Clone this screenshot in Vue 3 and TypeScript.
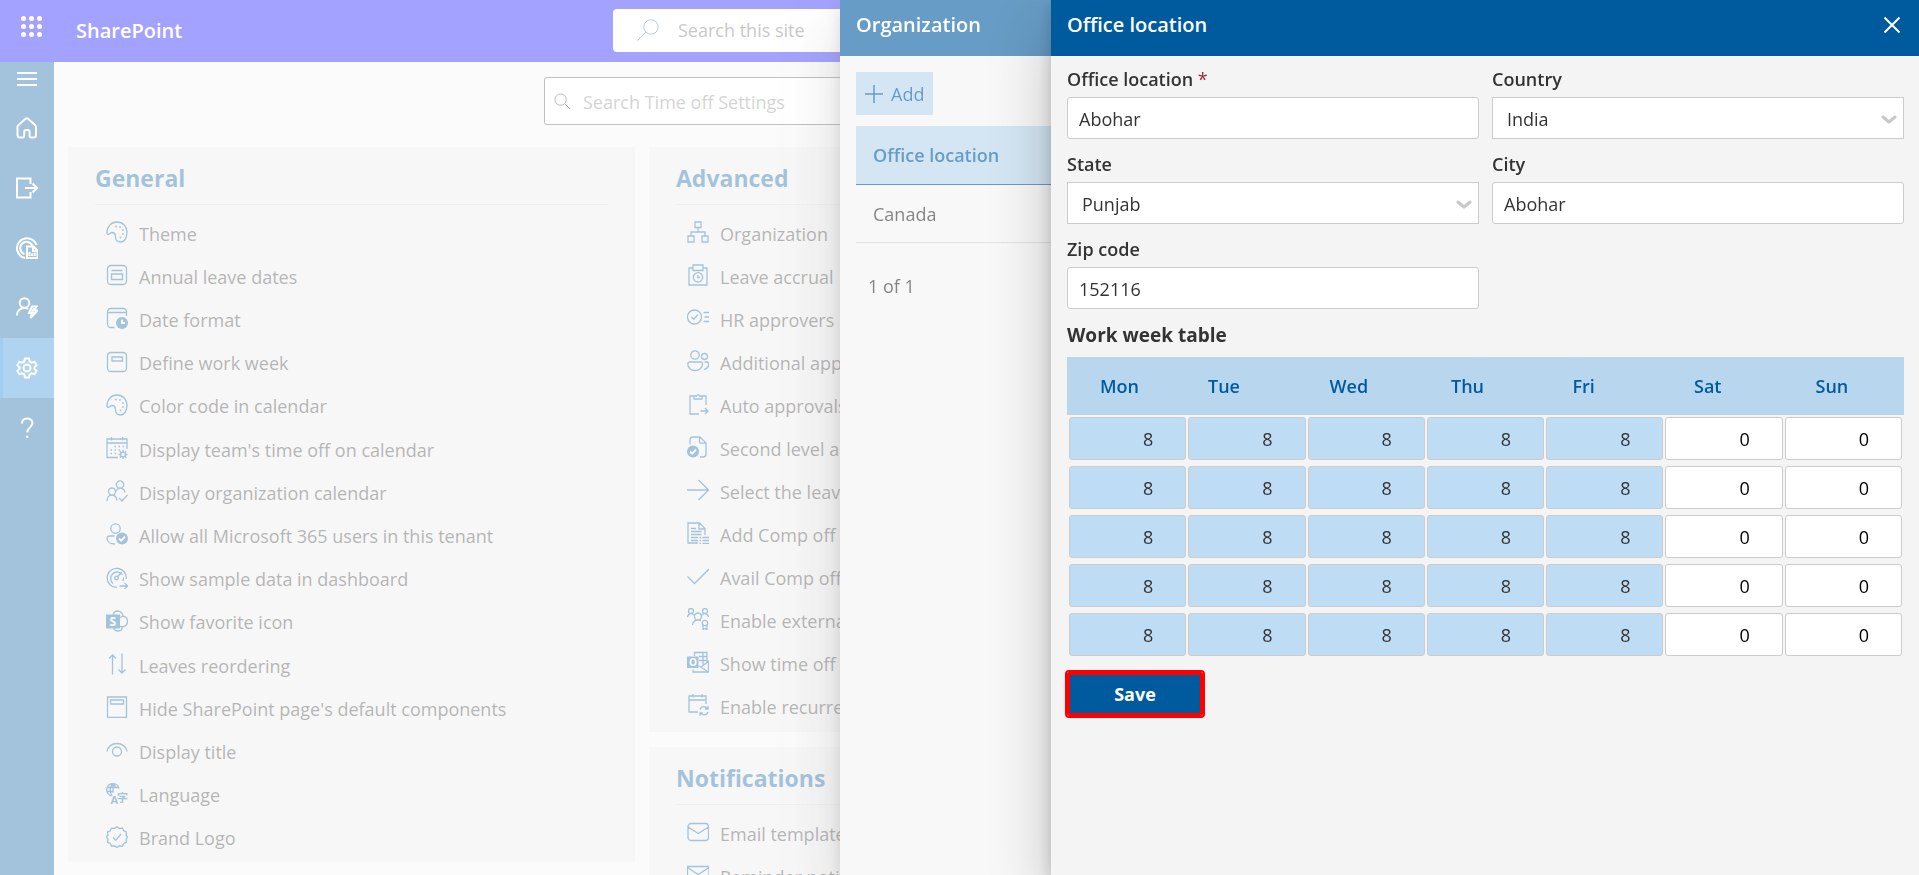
<script setup lang="ts">
import { ref } from 'vue'

interface Glyph { x: number; y: number; size: number; text: string; light?: boolean }
interface Icon { line?: string; fill?: string; cut?: string; glyphs?: Glyph[] }
interface Item { icon: string; label: string }
interface Card { title: string; items: Item[] }

const circle = (cx: number, cy: number, r: number): string =>
  `M${cx - r} ${cy}a${r} ${r} 0 1 0 ${2 * r} 0a${r} ${r} 0 1 0 ${-2 * r} 0z`

const roundBox = 'M5 1.5h12a3.5 3.5 0 0 1 3.5 3.5v12a3.5 3.5 0 0 1-3.5 3.5H5A3.5 3.5 0 0 1 1.5 17V5A3.5 3.5 0 0 1 5 1.5z'

const icons: Record<string, Icon> = {
  home: { line: 'M1.5 10.2c0-.8.3-1.5.9-2.1l6.8-6.2a2.2 2.2 0 0 1 3 0l6.900 6.200c.6.6.9 1.300.9 2.100V18a2.500 2.500 0 0 1-2.500 2.500H15c-.8 0-1.400-.6-1.400-1.400v-4a2 2 0 0 0-2-2h-1.400a2 2 0 0 0-2 2v4c0 .8-.6 1.400-1.400 1.400H4A2.500 2.500 0 0 1 1.500 18z' },
  exit: { line: 'M14.500 7V1.500H1V20.500h13.500V15M9 11h12M16.500 6.500 21 11l-4.500 4.500' },
  report: { line: 'M9 21A10 10 0 1 1 20.500 8M8.500 17a6.300 6.300 0 1 1 8-8M11 9.500h6.500l4 4V21H11zM17 9.500V14h4.500M13.500 19v-4M16 19v-2.500M18.700 19v-3.500' },
  userBolt: { line: `${circle(8.5, 6, 4.8)}M1 18.500c0-4.500 3-7.500 7.500-7.500 1.500 0 2.500.3 3.500.8M16 9.500h4.500l-2.500 4h3.500l-7 7.500 1.500-5h-3z`, fill: 'M17 11h2.500l-2.500 4h2.500l-4 4 1.500-4h-2z' },
  gear: { line: `M9 1.500h4l.7 3 2 1.100 2.900-.9 2 3.500L18.400 10.300v1.400l2.200 2.100-2 3.500-2.900-.9-2 1.100-.7 3H9l-.7-3-2-1.100-2.900.9-2-3.500 2.200-2.100v-1.400L1.400 8.200l2-3.500 2.900.9 2-1.100z${circle(11, 11, 3.5)}` },
  help: { line: 'M6 6.500C6 3.500 8 1.500 11 1.500s5.500 1.800 5.500 4.700c0 3.300-5.300 4.800-5.300 9.300', fill: circle(11.2, 19.7, 1.3) },
  menu: { line: 'M1 4h20M1 10h20M1 16h20' },
  palette: {
    line: 'M1 12C1 5.500 5 1 11 1s10 4.500 10 10-2.500 10-6.500 10S9.500 18.500 9.500 16c0-2.500-1-4.500-3.500-4.500-1.600 0-2.300 2-3.800 2C1.300 13.500 1 12.700 1 12z',
    fill: circle(10, 5.5, .9) + circle(14, 6, .9) + circle(17, 9, .9) + circle(17, 13, .9) + circle(14.5, 16.5, .9),
  },
  annual: { line: `${roundBox}M5.500 6.500h11M5.500 10h11v5.500h-11z` },
  dateClock: { line: 'M8.500 20.500H5A3.500 3.500 0 0 1 1.500 17V5A3.500 3.500 0 0 1 5 1.500h12A3.500 3.500 0 0 1 20.500 5v4M1.500 5.500h19', fill: circle(16, 16, 6), cut: 'M16 12.500V16h3' },
  define: { line: `${roundBox}M6 6h10.500v4H6z` },
  teamCalendar: { line: `M12 20.500H1V2h20v10M1 6h20M5.500 0v3.500M16.500 0v3.500M8.500 9.500h1.500M12.500 9.500H14M16.500 9.500H18M4.500 13H6M8.500 13h1.500M12.500 13H14M4.500 16.500H6M8.500 16.500h1.500${circle(17, 17.5, 2.4)}M17 12.800v2M17 20v2M12.500 17.500h2M19.500 17.500h2M13.800 14.300l1.400 1.400M18.800 19.300l1.400 1.400M20.200 14.300l-1.400 1.400M15.200 19.300l-1.400 1.400` },
  people: { line: `${circle(14, 4.5, 3.7)}${circle(6, 11.5, 3.5)}M1 21c0-3.500 2-6 5-6s4.500 2.500 5 5.500M10 11c1-1.800 2.300-2.800 4-2.800 2.700 0 4.500 1.800 5 4.300M13 18l3 3 5.500-6` },
  userCheck: { line: `${circle(9.5, 5.5, 4.7)}M8.500 13H3.500C2 13 1 14 1 15.500 1 19 4.500 21 9 21`, fill: circle(16, 15.5, 6), cut: 'M13 15.500l2.200 2.200 3.800-4' },
  gauge: { line: `M11 20.500A9.600 9.600 0 1 1 20.300 12M7 16.500a6.500 6.500 0 1 1 9.500-8.700M17.500 10.500c0 1.500-.2 2.500-.8 3.500${circle(10.5, 11, 1.8)}M12 9.500l3.500-4.500M13.500 19h7.500M18.500 16l3 3-3 3` },
  sharepoint: { line: 'M7 4.500C8 2 9.500 1 11.500 1c3 0 5.500 2.200 5.500 5.200 2.600.3 4.500 2.500 4.500 5.300 0 3-2.300 5.300-5.200 5.300 0 2.500-1.800 4.200-4.300 4.200-2.300 0-3.800-1-4.300-3M14 8c1-.9 1.800-1.500 3-1.800M14 16.500l2.500.3', fill: 'M0 4.500h14v14H0z', glyphs: [{ x: 3.4, y: 16, size: 12, text: 'S', light: true }] },
  reorder: { line: 'M6.500 21.500V2M3 5.500 6.500 2 10 5.500M16 .5V20M12.500 16.500 16 20l3.500-3.500' },
  page: { line: 'M1.500 1h19v20.500h-19zM4.500 4h13v4h-13z' },
  eye: { line: `M1 12.500C1.800 7.500 6 4.500 11 4.500s9.200 3 10 8${circle(11, 12.5, 4.5)}` },
  language: { line: `M5.500 12.800A6.200 6.200 0 1 1 13 5.500M7 .8v9M1 4.500h12M1 8.500h6M7 .8C5 2.500 4.200 4.500 4.200 7s.8 4 1.800 5.500M7 .8c1.800 1.500 2.500 3 2.600 4.500`, glyphs: [{ x: 4.5, y: 20.5, size: 11, text: 'A' }, { x: 11, y: 19, size: 11, text: '字' }] },
  badge: { line: 'M11 .8l2.500 1.700 3-.4 1.200 2.700 2.700 1.200-.4 3L21.500 11l-1.500 2.300.4 3-2.700 1.200-1.200 2.700-3-.4L11 21.500l-2.500-1.700-3 .4-1.200-2.700-2.700-1.200.4-3L.5 11 2 9l-.4-3 2.700-1.200L5.500 2.100l3 .4zM7 11.500l2.800 2.800L15 8' },
  org: { line: 'M8 1h6v5.500H8zM1 15h6v6H1zM15 15h6v6h-6zM11 6.500V11M4 15v-4h14v4' },
  accrual: { line: `M6 4H2v17h18V4h-4M6 1h10v5.500H6z${circle(11, 13.3, 4.7)}M10.800 11v2.500H13` },
  approver: { line: `${circle(7.5, 10, 7)}M4.500 10l2.200 2.200L11 7.500M16.500 5.500H22M17.500 10H22M16.500 14.500H22` },
  group: { line: `${circle(8, 5, 4.2)}${circle(17.5, 6.5, 3)}M3 12h10.500c1.300 0 2 .7 2 2 0 4-3.500 6.500-7.500 6.500S.8 18 .8 14c0-1.300.9-2 2.200-2zM17.500 12H20c1 0 1.800.7 1.800 2 0 3-2.300 5.300-5 5.300` },
  clipboard: { line: 'M7 3H3v18h9M15 3h4v9M7 6V3h2.500a1.600 1.600 0 0 1 3 0H15v3zM13.500 18h7.500M18 15l3 3-3 3' },
  docCheck: { line: 'M3 8.500V4a3 3 0 0 1 3-3h7l6 6v11a3 3 0 0 1-3 3h-3M12.500 1v4.500c0 1 .7 1.700 1.700 1.700H19', fill: circle(6, 15.5, 6), cut: 'M3 15.500l2.200 2.200L9 13.700' },
  arrow: { line: 'M0 11h21.500M11.500 1l10 10-10 10' },
  document: { line: 'M11 21H1V1h11.500l5.500 5.500V13M12 1v6h6M4 6.500h5M4 9.500h10.500M4 12.500h10.500M4 15.500h7M4 18.500h7M15.500 15.500H22M15.500 18.500H22M15.500 21.500H22M12.500 15.500h1.500M12.500 18.500h1.500M12.500 21.500h1.500' },
  check: { line: 'M.5 11.500 7.500 18.500 22 4' },
  external: { line: `${circle(4, 3, 2.5)}${circle(18, 3, 2.5)}${circle(11, 8.5, 3.5)}M.5 9C1 7 2.200 5.700 4 5.700c1.200 0 2.200.4 3 1.300M21.500 9c-.5-2-1.700-3.300-3.500-3.300-1.200 0-2.200.4-3 1.300M5.500 17c.3-3 2.500-5 5.500-5 1 0 2 .2 2.800.8${circle(18, 15, 2.7)}M16 17.500v4l2-1 2 1v-4` },
  outlook: { line: 'M7.500 5V1.500h12.500V11M12 5.500h8M16 1.500v12M12 9.500h8M6 18.500V21h15.500V10.500L14 16M12 15l9 5.500', fill: 'M0 5.500h11.500v11.500H0z', glyphs: [{ x: 2, y: 15, size: 10, text: 'O', light: true }] },
  recurring: { line: 'M11 18H2V2h17v8M2 6h17M6 0v3.500M15 0v3.500M13 15.500c.7-1.800 2-2.800 4-2.800 1.500 0 2.800.7 3.500 2M21 12v3h-3M21 18c-.7 1.800-2 2.800-4 2.800-1.500 0-2.800-.7-3.500-2M13 22v-3.200h3' },
  mail: { line: 'M4 2.500h14.500a3 3 0 0 1 3 3v11a3 3 0 0 1-3 3H4a3 3 0 0 1-3-3v-11a3 3 0 0 1 3-3zM1 6l10.300 6.500L21.500 6' },
  mailSquare: { line: 'M.5 2.500h21.500v16H.5zM.5 3.500l10.700 7L22 3.500' },
}

const rail: Item[] = [
  { icon: 'home', label: 'Home' },
  { icon: 'exit', label: 'Request leave' },
  { icon: 'report', label: 'Reports' },
  { icon: 'userBolt', label: 'Quick actions' },
  { icon: 'gear', label: 'Settings' },
  { icon: 'help', label: 'Help' },
]

const general: Card = {
  title: 'General',
  items: [
    { icon: 'palette', label: 'Theme' },
    { icon: 'annual', label: 'Annual leave dates' },
    { icon: 'dateClock', label: 'Date format' },
    { icon: 'define', label: 'Define work week' },
    { icon: 'palette', label: 'Color code in calendar' },
    { icon: 'teamCalendar', label: "Display team's time off on calendar" },
    { icon: 'people', label: 'Display organization calendar' },
    { icon: 'userCheck', label: 'Allow all Microsoft 365 users in this tenant' },
    { icon: 'gauge', label: 'Show sample data in dashboard' },
    { icon: 'sharepoint', label: 'Show favorite icon' },
    { icon: 'reorder', label: 'Leaves reordering' },
    { icon: 'page', label: "Hide SharePoint page's default components" },
    { icon: 'eye', label: 'Display title' },
    { icon: 'language', label: 'Language' },
    { icon: 'badge', label: 'Brand Logo' },
  ],
}
const advanced: Card = {
  title: 'Advanced',
  items: [
    { icon: 'org', label: 'Organization' },
    { icon: 'accrual', label: 'Leave accrual' },
    { icon: 'approver', label: 'HR approvers' },
    { icon: 'group', label: 'Additional approvers' },
    { icon: 'clipboard', label: 'Auto approvals' },
    { icon: 'docCheck', label: 'Second level approval' },
    { icon: 'arrow', label: 'Select the leave' },
    { icon: 'document', label: 'Add Comp off' },
    { icon: 'check', label: 'Avail Comp off' },
    { icon: 'external', label: 'Enable external' },
    { icon: 'outlook', label: 'Show time off' },
    { icon: 'recurring', label: 'Enable recurrence' },
  ],
}
const notifications: Card = {
  title: 'Notifications',
  items: [
    { icon: 'mail', label: 'Email templates' },
    { icon: 'mailSquare', label: 'Reminder notifications' },
  ],
}
const columns: Card[][] = [[general], [advanced, notifications]]

const office = ref('Abohar')
const country = ref('India')
const state = ref('Punjab')
const city = ref('Abohar')
const zip = ref('152116')
const days = ['Mon', 'Tue', 'Wed', 'Thu', 'Fri', 'Sat', 'Sun']
const weeks = ref<string[][]>(
  Array.from({ length: 5 }, () => days.map((_, i) => (i < 5 ? '8' : '0'))),
)
</script>

<template>
  <div class="app">
    <header class="topbar">
      <button class="waffle" aria-label="App launcher">
        <span v-for="n in 9" :key="n"></span>
      </button>
      <a class="brand" href="#">SharePoint</a>
      <label class="site-search">
        <svg viewBox="0 0 22 22"><circle cx="14" cy="8" r="7.2" /><path d="M8.800 13.200.5 21.500" /></svg>
        <input type="search" placeholder="Search this site" aria-label="Search this site" />
      </label>
    </header>

    <div class="shell">
      <nav class="rail">
        <button class="menu" aria-label="Menu">
          <svg class="icon" viewBox="0 0 22 22"><path :d="icons.menu.line" /></svg>
        </button>
        <a v-for="entry in rail" :key="entry.icon" href="#" :aria-label="entry.label" :class="{ active: entry.icon === 'gear' }">
          <svg class="icon" viewBox="0 0 22 22">
            <path :d="icons[entry.icon].line" />
            <path v-if="icons[entry.icon].fill" class="solid" :d="icons[entry.icon].fill" />
          </svg>
        </a>
      </nav>

      <main class="content">
        <label class="settings-search">
          <svg viewBox="0 0 18 18"><circle cx="7" cy="7" r="6" /><path d="M11.500 11.500 17 17" /></svg>
          <input type="search" placeholder="Search Time off Settings" aria-label="Search Time off Settings" />
        </label>
        <div class="columns">
          <div v-for="(column, c) in columns" :key="c" class="column">
            <section v-for="card in column" :key="card.title" class="card">
              <h2>{{ card.title }}</h2>
              <ul>
                <li v-for="item in card.items" :key="item.label">
                  <a href="#">
                    <svg class="icon" viewBox="0 0 22 22">
                      <path v-if="icons[item.icon].line" :d="icons[item.icon].line" />
                      <path v-if="icons[item.icon].fill" class="solid" :d="icons[item.icon].fill" />
                      <path v-if="icons[item.icon].cut" class="cut" :d="icons[item.icon].cut" />
                      <text
                        v-for="glyph in icons[item.icon].glyphs ?? []"
                        :key="glyph.text"
                        :x="glyph.x"
                        :y="glyph.y"
                        :font-size="glyph.size"
                        :class="{ light: glyph.light }"
                      >{{ glyph.text }}</text>
                    </svg>
                    <span>{{ item.label }}</span>
                  </a>
                </li>
              </ul>
            </section>
          </div>
        </div>
      </main>
    </div>
  </div>

  <div class="scrim"></div>
  <aside class="drawer list-drawer">
    <header class="drawer-head"><h2>Organization</h2></header>
    <div class="list-body">
      <button class="add">
        <svg viewBox="0 0 18 18"><path d="M9 0v18M0 9h18" /></svg>
        Add
      </button>
      <table class="locations">
        <thead><tr><th scope="col">Office location</th></tr></thead>
        <tbody><tr><td>Canada</td></tr></tbody>
      </table>
      <p class="pager">1 of 1</p>
    </div>
  </aside>

  <div class="scrim"></div>
  <aside class="drawer form-drawer">
    <header class="drawer-head">
      <h2>Office location</h2>
      <button class="close" aria-label="Close">
        <svg viewBox="0 0 16 16"><path d="M.5.5l15 15M15.500.5l-15 15" /></svg>
      </button>
    </header>
    <form class="form" @submit.prevent>
      <div class="fields">
        <div class="field">
          <label for="office">Office location <span class="required">*</span></label>
          <input id="office" v-model="office" type="text" />
        </div>
        <div class="field">
          <label for="country">Country</label>
          <div class="select">
            <select id="country" v-model="country"><option>India</option><option>Canada</option></select>
            <svg viewBox="0 0 16 9"><path d="M2 2l6 5 6-5" /></svg>
          </div>
        </div>
        <div class="field">
          <label for="state">State</label>
          <div class="select">
            <select id="state" v-model="state"><option>Punjab</option><option>Haryana</option></select>
            <svg viewBox="0 0 16 9"><path d="M2 2l6 5 6-5" /></svg>
          </div>
        </div>
        <div class="field">
          <label for="city">City</label>
          <input id="city" v-model="city" type="text" />
        </div>
        <div class="field">
          <label for="zip">Zip code</label>
          <input id="zip" v-model="zip" type="text" />
        </div>
      </div>
      <h3>Work week table</h3>
      <table class="week">
        <thead>
          <tr><th v-for="day in days" :key="day" scope="col">{{ day }}</th></tr>
        </thead>
        <tbody>
          <tr v-for="(week, w) in weeks" :key="w">
            <td v-for="(day, d) in days" :key="day">
              <input v-model="week[d]" type="text" inputmode="numeric" :class="{ working: week[d] !== '0' }" :aria-label="`Week ${w + 1} ${day}`" />
            </td>
          </tr>
        </tbody>
      </table>
      <button class="save" type="submit">Save</button>
    </form>
  </aside>
</template>

<style>
html, body { height: 100%; overflow: hidden; }
body { margin: 0; }
</style>

<style scoped>
.app, .drawer {
  font-family: "Open Sans", "Noto Sans", "Noto Sans CJK SC", sans-serif;
  font-size: 18px;
  font-weight: 400;
  color: #333;
}
.app *, .drawer * { box-sizing: border-box; }
button, input, select { font: inherit; color: inherit; margin: 0; }
button { border: 0; padding: 0; background: none; cursor: pointer; }
a { color: inherit; text-decoration: none; }
h2, h3, p, ul { margin: 0; padding: 0; }
svg { display: block; flex: none; fill: none; stroke: currentColor; }

.app { height: 100vh; display: flex; flex-direction: column; overflow: hidden; background: #f4f4f4; }
.topbar { flex: none; height: 62px; display: flex; align-items: center; padding-bottom: 2px; background: #00f; color: #fff; }
.waffle { display: grid; grid-template-columns: repeat(3, 5px); gap: 3px; margin: 0 34px 8px 21px; }
.waffle span { width: 5px; height: 5px; border-radius: 50%; background: #fff; }
.brand { width: 537px; font-size: 20px; font-weight: 600; }
.site-search { width: 694px; height: 43px; display: flex; align-items: center; gap: 19px; padding-left: 24px; border-radius: 4px; background: #fff; color: #2670d0; }
.site-search svg { width: 22px; height: 22px; }
.site-search input, .settings-search input { flex: 1; min-width: 0; padding: 0; border: 0; outline: 0; background: none; }
.site-search input::placeholder { color: #666; opacity: 1; }

.shell { flex: 1; min-height: 0; display: flex; }
.rail { flex: none; width: 54px; display: flex; flex-direction: column; background: #005a9e; color: #fff; }
.rail .icon { stroke-width: 2; }
.menu { height: 36px; display: flex; justify-content: center; align-items: center; }
.rail a { height: 60px; display: flex; justify-content: center; align-items: center; }
.rail .active { border-left: 3px solid #0078d4; padding-right: 3px; background: #2688d5; }

.content { flex: 1; min-width: 0; padding: 15px 122px 0 14px; }
.settings-search { width: 700px; height: 48px; display: flex; align-items: center; gap: 12px; margin: 0 auto 22px 476px; padding: 1px 0 0 9px; border: 1px solid #505050; border-radius: 3px; background: #fff; }
.settings-search svg { width: 17px; height: 17px; }
.settings-search input::placeholder { color: #888; opacity: 1; }
.columns { display: grid; grid-template-columns: repeat(3, 1fr); gap: 14px; align-items: start; }
.column { display: grid; gap: 15px; }
.card { padding: 11px 27px 4px; background: #e9e9e9; }
.card:only-child { min-height: 715px; display: flex; flex-direction: column; padding-bottom: 2px; }
.card h2 { flex: none; height: 47px; line-height: 40px; margin-bottom: 7px; border-bottom: 1px solid #d6d6d6; font-size: 23px; font-weight: 700; color: #005a9e; }
.card ul { flex: 1; display: flex; flex-direction: column; justify-content: space-between; list-style: none; padding-left: 11px; }
.card a { height: 43px; display: flex; align-items: center; gap: 11px; white-space: nowrap; }
.icon { width: 22px; height: 22px; stroke-width: 1.3; }
.card .icon { margin-bottom: 3px; color: #005a9e; }
.icon .solid { fill: currentColor; stroke: none; }
.icon .cut { stroke: #fff; stroke-width: 1.8; }
.icon text { fill: currentColor; stroke: none; font-weight: 700; }
.icon text.light { fill: #fff; }

.scrim { position: fixed; inset: 0; background: rgba(255, 255, 255, .4); }
.drawer { position: fixed; top: 0; right: 0; bottom: 0; max-width: 100%; background: #f4f4f4; box-shadow: 0 26px 58px rgba(0, 0, 0, .22), 0 5px 14px rgba(0, 0, 0, .18); }
.list-drawer { width: 1079px; }
.form-drawer { width: 868px; }
.drawer-head { height: 56px; display: flex; justify-content: space-between; padding: 5px 16px 0; background: #005a9e; color: #fff; }
.drawer-head h2 { font-size: 20px; line-height: 40px; font-weight: 600; }
.close { width: 22px; height: 40px; display: flex; align-items: center; justify-content: center; }
.close svg { width: 16px; height: 16px; stroke-width: 2; }

.list-body { padding: 16px; }
.add { height: 43px; display: flex; align-items: center; gap: 8px; padding: 0 9px; background: #b7d5ed; color: #005a9e; }
.add svg { width: 18px; height: 18px; stroke-width: 1.5; }
.locations { width: 100%; margin-top: 11px; border-collapse: collapse; text-align: left; }
.locations th { height: 58px; padding: 0 17px; border-bottom: 1px solid #005a9e; background: #b7d5ed; color: #005a9e; font-weight: 600; }
.locations td { height: 58px; padding: 1px 17px 0; border-bottom: 1px solid #cfcfcf; }
.pager { margin: 30px 12px 0; line-height: 26px; }

.form { padding: 10px 15px 16px 16px; }
.fields { display: grid; grid-template-columns: 1fr 1fr; column-gap: 13px; }
.field { height: 85px; }
.field label { display: block; line-height: 26px; margin-bottom: 5px; font-weight: 600; }
.required { color: #a4262c; font-weight: 400; }
.field input, .select { width: 100%; height: 42px; border: 1px solid #ccc; background: #fff; }
.field input { padding: 1px 11px 0; border-radius: 3px; }
.select { position: relative; }
.select select { width: 100%; height: 100%; padding: 1px 36px 0 14px; border: 0; background: none; appearance: none; }
.select svg { position: absolute; right: 6px; top: 17px; width: 16px; height: 9px; stroke: #c8c8c8; stroke-width: 3; stroke-linecap: round; stroke-linejoin: round; pointer-events: none; }
.form h3 { line-height: 28px; margin: 0 0 8px; font-size: 19px; font-weight: 700; }
.week, .week thead, .week tbody { display: block; }
.week thead tr { display: grid; grid-template-columns: 108px repeat(6, 1fr); background: #b8d6ee; color: #005a9e; }
.week th { padding: 0 0 0 33px; text-align: left; line-height: 58px; font-weight: 600; }
.week tbody { padding: 2px; }
.week tbody tr { display: grid; grid-template-columns: repeat(7, 1fr); gap: 2px; margin-bottom: 6px; }
.week td { padding: 0; display: flex; }
.week input { width: 100%; height: 43px; padding: 0 32px 0 8px; border: 1px solid #ccc; border-radius: 3px; background: #fff; color: #000; text-align: right; }
.week .working { background: #bedcf4; color: #333; }
.save { width: 136px; height: 44px; margin-top: 8px; border: 3px solid #f00; outline: 2px solid #f00; border-radius: 2px; background: #005a9e; color: #fff; font-weight: 700; }
</style>
